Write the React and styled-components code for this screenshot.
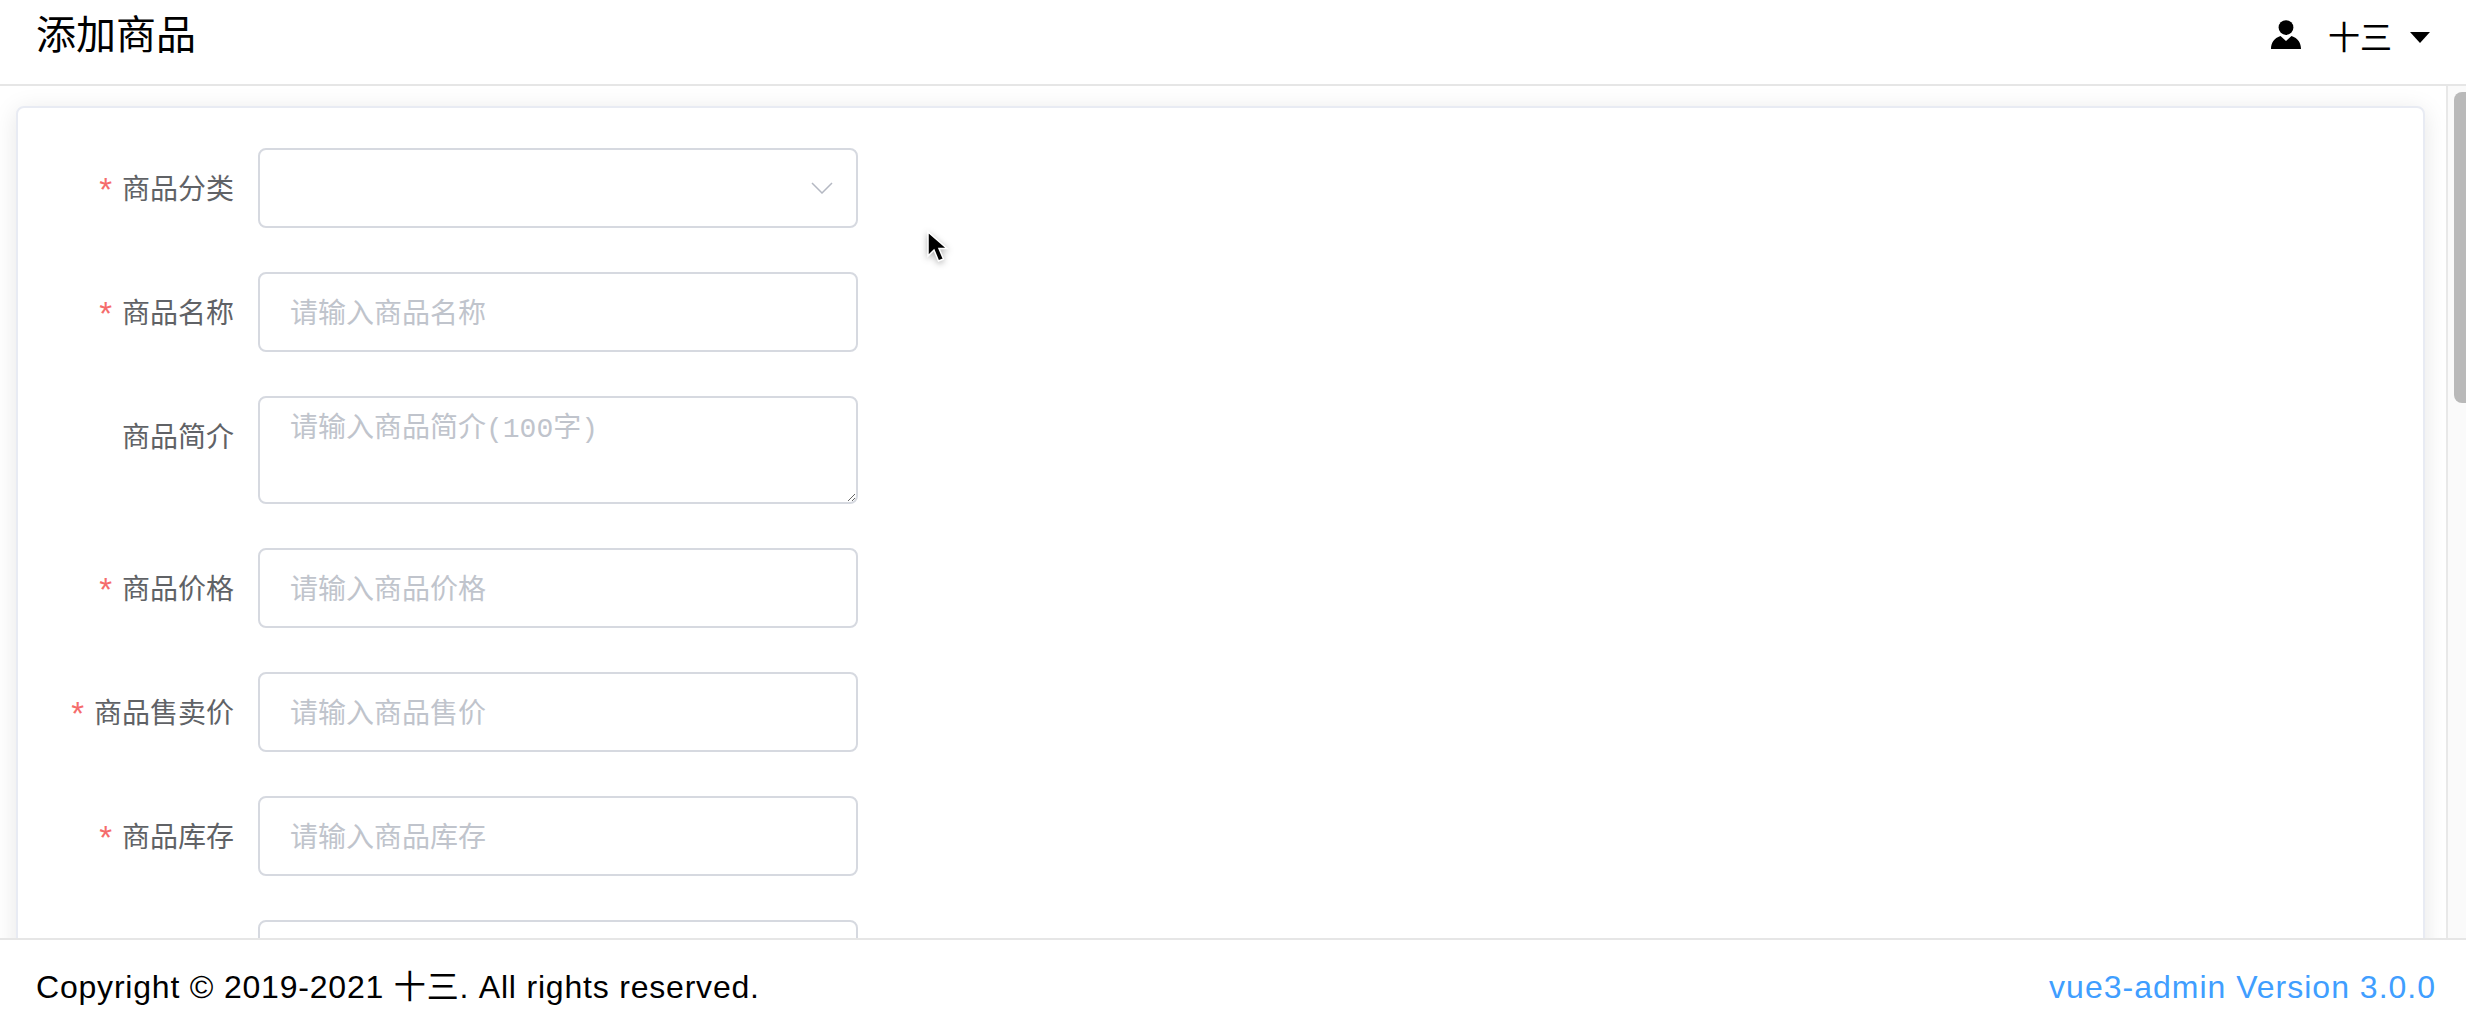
import styled, { createGlobalStyle } from 'styled-components'

const GlobalStyle = createGlobalStyle`
  html,
  body {
    margin: 0;
    height: 100%;
    overflow: hidden;
    background: #fff;
    font-family: 'Liberation Sans', 'Noto Sans CJK SC', sans-serif;
  }
  * {
    box-sizing: border-box;
  }
`

const Page = styled.div`
  display: flex;
  flex-direction: column;
  height: 1018px;
  position: relative;
`
const Header = styled.header`
  flex: none;
  height: 86px;
  display: flex;
  align-items: center;
  justify-content: space-between;
  padding: 0 36px 14px 36px;
  border-bottom: 2px solid #e6e6e6;
`
const Title = styled.h1`
  margin: 0 0 6px;
  font-family: 'Noto Sans CJK SC', sans-serif;
  font-size: 40px;
  font-weight: 400;
  color: #000;
`
const UserBox = styled.div`
  display: flex;
  align-items: center;
  font-family: 'Noto Sans CJK SC', sans-serif;
  font-size: 32px;
  color: #000;
`
const UserName = styled.span`
  margin: 0 18px 0 27px;
`
const CaretWrap = styled.span`
  display: flex;
  padding-top: 5px;
`
const Body = styled.div`
  flex: 1;
  min-height: 0;
  display: flex;
`
const Main = styled.main`
  flex: 1;
  min-width: 0;
  overflow: hidden;
  padding: 20px 21px 0 16px;
  background: #fff;
`
const ScrollRail = styled.div`
  flex: none;
  width: 20px;
  padding: 6px 0 0 6px;
  background: #fafafa;
  border-left: 2px solid #e8e8e8;
`
const ScrollThumb = styled.div`
  height: 311px;
  background: #b9b9b9;
  border-radius: 8px 0 0 8px;
`
const Card = styled.section`
  min-height: 2200px;
  padding: 40px 0 0;
  background: #fff;
  border: 2px solid #e8ebf3;
  border-radius: 8px;
  box-shadow: 0 4px 24px rgba(0, 0, 0, 0.1);
`
const Row = styled.div`
  display: flex;
  margin-bottom: 44px;
`
const Label = styled.label`
  flex: none;
  width: 240px;
  padding: 0 24px 3px 0;
  height: 80px;
  display: flex;
  align-items: center;
  justify-content: flex-end;
  font-family: 'Noto Sans CJK SC', sans-serif;
  font-size: 28px;
  color: #606266;
`
const Star = styled.span`
  margin-right: 10px;
  padding-top: 6px;
  font-family: 'Liberation Sans', sans-serif;
  font-size: 33px;
  color: #f56c6c;
`
const fieldStyle = `
  display: block;
  width: 600px;
  border: 2px solid #d6d9e0;
  border-radius: 8px;
  padding: 0 30px;
  font-size: 28px;
  color: #606266;
  background: #fff;
  outline: none;
`
const Input = styled.input`
  ${fieldStyle}
  height: 80px;
  padding-bottom: 2px;
  font-family: 'Noto Sans CJK SC', sans-serif;
  &::placeholder {
    color: #c0c4cc;
    opacity: 1;
  }
`
const TextArea = styled.textarea`
  ${fieldStyle}
  height: 108px;
  padding: 11px 30px;
  line-height: 1.5;
  font-family: 'Liberation Mono', 'Noto Sans CJK SC', monospace;
  &::placeholder {
    color: #c0c4cc;
    opacity: 1;
  }
`
const SelectBox = styled.div`
  ${fieldStyle}
  height: 80px;
  display: flex;
  align-items: center;
  justify-content: flex-end;
  padding: 0 23px;
`
const Footer = styled.footer`
  flex: none;
  height: 80px;
  display: flex;
  align-items: center;
  justify-content: space-between;
  padding: 16px 30px 0 36px;
  border-top: 2px solid #e6e6e6;
  font-size: 32px;
  line-height: 40px;
  letter-spacing: 0.8px;
  background: #fff;
`
const Copyright = styled.span`
  color: #000;
`
const Version = styled.a`
  letter-spacing: 1px;
  color: #409eff;
`
const Pointer = styled.svg`
  position: absolute;
  left: 926px;
  top: 230px;
  filter: drop-shadow(0 2px 3px rgba(0, 0, 0, 0.3));
`

const UserIcon = () => (
  <svg width="30" height="30" viewBox="0 0 30 30">
    <circle cx="15" cy="7.6" r="7.4" fill="#000" />
    <path d="M0 29C0 23 3 18 9.5 16L15 21L20.5 16C27 18 30 23 30 29Z" fill="#000" />
  </svg>
)
const Caret = () => (
  <svg width="20" height="11" viewBox="0 0 20 11">
    <path d="M0 0H20L10 11Z" fill="#000" />
  </svg>
)
const Chevron = () => (
  <svg width="22" height="12" viewBox="0 0 22 12">
    <path d="M1 1L11 11L21 1" fill="none" stroke="#b4b8c2" strokeWidth="1.5" />
  </svg>
)
const Cursor = () => (
  <Pointer width="26" height="38" viewBox="0 0 26 38">
    <path d="M2 2V26L8 20L12.5 31L17.5 29L13 18.5H21Z" fill="#000" stroke="#fff" strokeWidth="1.5" />
  </Pointer>
)

const fields = [
  { label: '商品名称', placeholder: '请输入商品名称', required: true },
  { label: '商品简介', placeholder: '请输入商品简介(100字)', multiline: true },
  { label: '商品价格', placeholder: '请输入商品价格', required: true },
  { label: '商品售卖价', placeholder: '请输入商品售价', required: true },
  { label: '商品库存', placeholder: '请输入商品库存', required: true },
  { label: '', placeholder: '' },
]

const App = () => {
  return (
    <Page>
      <GlobalStyle />
      <Header>
        <Title>添加商品</Title>
        <UserBox>
          <UserIcon />
          <UserName>十三</UserName>
          <CaretWrap>
            <Caret />
          </CaretWrap>
        </UserBox>
      </Header>
      <Body>
        <Main>
          <Card>
            <Row>
              <Label>
                <Star>*</Star>商品分类
              </Label>
              <SelectBox>
                <Chevron />
              </SelectBox>
            </Row>
            {fields.map((field, index) => (
              <Row key={index}>
                <Label>
                  {field.required && <Star>*</Star>}
                  {field.label}
                </Label>
                {field.multiline ? (
                  <TextArea placeholder={field.placeholder} />
                ) : (
                  <Input placeholder={field.placeholder} />
                )}
              </Row>
            ))}
          </Card>
        </Main>
        <ScrollRail>
          <ScrollThumb />
        </ScrollRail>
      </Body>
      <Footer>
        <Copyright>Copyright © 2019-2021 十三. All rights reserved.</Copyright>
        <Version>vue3-admin Version 3.0.0</Version>
      </Footer>
      <Cursor />
    </Page>
  )
}

export default App
